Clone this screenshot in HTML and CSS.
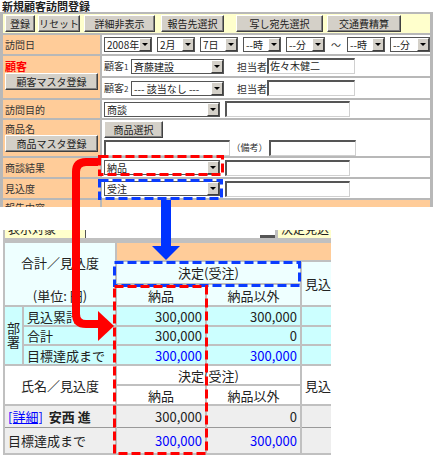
FILE: index.html
```html
<!DOCTYPE html>
<html lang="ja">
<head>
<meta charset="utf-8">
<title>新規顧客訪問登録</title>
<link rel="stylesheet" href="styles.css">
</head>
<body>
<div class="page">
  <div class="top">
    <div class="title">新規顧客訪問登録</div>
    <div class="form">
      <div class="btnrow">
        <span class="btn bw30">登録</span>
        <span class="btn bw42 ml3">リセット</span>
        <span class="btn bw71 ml4">詳細非表示</span>
        <span class="btn bw63 ml6">報告先選択</span>
        <span class="btn bw87 ml12">写し宛先選択</span>
        <span class="btn bw74 ml4">交通費精算</span>
      </div>

      <div class="lab">訪問日</div>
      <div class="val dates">
        <span class="sel w48"><span class="st">2008年</span><span class="ar"></span></span>
        <span class="sel w38"><span class="st">2月</span><span class="ar"></span></span>
        <span class="sel w38"><span class="st">7日</span><span class="ar"></span></span>
        <span class="sel w38"><span class="st">--時</span><span class="ar"></span></span>
        <span class="sel w39"><span class="st">--分</span><span class="ar"></span></span>
        <span class="tilde">～</span>
        <span class="sel w38"><span class="st">--時</span><span class="ar"></span></span>
        <span class="sel w40"><span class="st">--分</span><span class="ar"></span></span>
      </div>

      <div class="lab cust">
        <span class="red">顧客</span>
        <span class="btn bw93">顧客マスタ登録</span>
      </div>
      <div class="val custv">
        <div class="sub">
          <span class="kk">顧客<small>1</small></span>
          <span class="sel w93"><span class="st">斉藤建設</span><span class="ar"></span></span>
          <span class="tan">担当者</span>
          <span class="inp w88">佐々木健二</span>
        </div>
        <div class="sub">
          <span class="kk">顧客<small>2</small></span>
          <span class="sel w93"><span class="st">--- 該当なし ---</span><span class="ar"></span></span>
          <span class="tan">担当者</span>
          <span class="inp w88"></span>
        </div>
      </div>

      <div class="lab">訪問目的</div>
      <div class="val">
        <span class="sel w116"><span class="st">商談</span><span class="ar"></span></span>
        <span class="inp w125 ml5"></span>
      </div>

      <div class="lab prod">
        <span class="pl">商品名</span>
        <span class="btn bw93">商品マスタ登録</span>
      </div>
      <div class="val prodv">
        <span class="btn bw59">商品選択</span>
        <div class="line">
          <span class="inp w126"></span>
          <span class="biko">（備考）</span>
          <span class="inp w87"></span>
        </div>
      </div>

      <div class="lab">商談結果</div>
      <div class="val">
        <span class="sel w116"><span class="st">納品</span><span class="ar"></span></span>
        <span class="inp w125 ml5"></span>
      </div>

      <div class="lab">見込度</div>
      <div class="val">
        <span class="sel w116"><span class="st">受注</span><span class="ar"></span></span>
        <span class="inp w125 ml5"></span>
      </div>

      <div class="lab rep">報告内容</div>
      <div class="val repv"></div>
    </div>
  </div>

  <div class="bottom">
    <div class="shot">
      <div class="prow">
        <div class="py pa"><span class="pt">表示対象</span></div>
        <div class="psel"><span class="pbar"></span></div>
        <div class="py pb"><span class="pt">決定見込</span></div>
      </div>
      <div class="tbl">
        <div class="c hd corner">
          <span>合計／見込度</span>
          <span>(単位: 円)</span>
        </div>
        <div class="c org"></div>
        <div class="c hd ketei">決定(受注)</div>
        <div class="c hd miko">見込(A)</div>
        <div class="c hd nh1">納品</div>
        <div class="c hd nh2">納品以外</div>
        <div class="c dept"><span class="vt">部署</span></div>

        <div class="c bd lt">見込累計</div>
        <div class="c bd num">300,000</div>
        <div class="c bd num">300,000</div>
        <div class="c bd"></div>

        <div class="c bd lt">合計</div>
        <div class="c bd num">300,000</div>
        <div class="c bd num">0</div>
        <div class="c bd"></div>

        <div class="c bd lt">目標達成まで</div>
        <div class="c bd num blue">300,000</div>
        <div class="c bd num blue">300,000</div>
        <div class="c bd"></div>

        <div class="c wh name">氏名／見込度</div>
        <div class="c wh ketei2">決定(受注)</div>
        <div class="c wh miko2">見込(A)</div>
        <div class="c wh nh3">納品</div>
        <div class="c wh nh4">納品以外</div>

        <div class="c gr span2">
          <div class="p1 lt"><span class="lnk">[詳細]</span><b class="nm">安西 進</b></div>
          <div class="p2 lt">目標達成まで</div>
        </div>
        <div class="c gr">
          <div class="p1 num">300,000</div>
          <div class="p2 num blue">300,000</div>
        </div>
        <div class="c gr">
          <div class="p1 num">0</div>
          <div class="p2 num blue">300,000</div>
        </div>
        <div class="c gr">
          <div class="p1"></div>
          <div class="p2"></div>
        </div>
      </div>
    </div>
  </div>

  <svg class="overlay" width="435" height="457" viewBox="0 0 435 457">
    <g fill="none" stroke-width="3" stroke-dasharray="9 4">
      <rect x="99.5" y="156.5" width="123" height="18" stroke="#ff0000"/>
      <rect x="99.5" y="180.5" width="122" height="18" stroke="#0a3cff"/>
      <rect x="114.5" y="262.5" width="185" height="23" stroke="#0a3cff"/>
      <rect x="114.5" y="286.5" width="92" height="167" stroke="#ff0000"/>
    </g>
    <path d="M98 162 H86 Q76 162 76 172 V314 Q76 324 86 324 H101" fill="none" stroke="#ff0000" stroke-width="8"/>
    <polygon points="98,311 114,326 98,341" fill="#ff0000"/>
    <rect x="161" y="200" width="10" height="47" fill="#0033ff"/>
    <polygon points="152,246 180,246 166,260" fill="#0033ff"/>
  </svg>
</div>
</body>
</html>
```

FILE: styles.css
```css
* { box-sizing: border-box; }
body {
  margin: 0;
  background: #fff;
  font-family: "Noto Sans CJK JP", "Noto Sans", sans-serif;
  color: #222;
}
.page { position: relative; width: 435px; height: 457px; overflow: hidden; }

/* ---------- top form ---------- */
.top { height: 207px; overflow: hidden; }
.title {
  height: 12px; line-height: 12px; font-size: 11px; font-weight: bold;
  padding: 0 0 0 2px; color: #222;
}
.form {
  display: grid;
  grid-template-columns: 97px 328px;
  grid-template-rows: 19px 19px 42px 18px 36px 19px 19px 20px;
  gap: 2px;
  padding: 2px 3px;
  width: 433px;
  background: #b8b8b8;
  font-size: 10px;
  line-height: 13px;
}
.btnrow {
  grid-column: 1 / 3;
  background: #ffffcc;
  display: flex; align-items: center;
  padding-left: 2px;
}
.btn {
  display: flex; align-items: center; justify-content: center;
  height: 17px;
  background: #d4d0c8;
  border: 1px solid; border-color: #fff #404040 #404040 #fff;
  box-shadow: inset -1px -1px 0 #808080;
  font-size: 10px; color: #222; white-space: nowrap;
}
.bw30 { width: 30px; } .bw42 { width: 42px; } .bw71 { width: 71px; }
.bw63 { width: 63px; } .bw87 { width: 87px; } .bw74 { width: 74px; }
.bw93 { width: 93px; } .bw59 { width: 59px; }
.ml3 { margin-left: 3px; } .ml4 { margin-left: 4px; } .ml5 { margin-left: 5px; }
.ml6 { margin-left: 6px; } .ml12 { margin-left: 12px; }

.lab {
  background: #ffcc99; color: #333;
  display: flex; align-items: center; padding-left: 2px;
}
.val { background: #fff; display: flex; align-items: center; padding-left: 2px; }
.dates { gap: 5px; }
.tilde { width: 12px; text-align: center; color: #333; }

.sel {
  display: flex; height: 15px; flex: none;
  border: 1px solid #555; background: #fff;
}
.st { flex: 1; padding-left: 2px; line-height: 13px; white-space: nowrap; overflow: hidden; }
.ar {
  width: 12px; flex: none;
  background: #d4d0c8;
  border: 1px solid; border-color: #fff #404040 #404040 #fff;
  display: flex; align-items: center; justify-content: center;
}
.ar::after {
  content: "";
  border-left: 3px solid transparent; border-right: 3px solid transparent;
  border-top: 3px solid #000;
}
.w38 { width: 38px; } .w39 { width: 39px; } .w40 { width: 40px; } .w48 { width: 48px; }
.w93 { width: 93px; } .w116 { width: 116px; }

.inp {
  height: 16px; flex: none; background: #fff;
  border-top: 2px solid #555; border-left: 2px solid #555;
  border-right: 1px solid #d0d0d0; border-bottom: 1px solid #d0d0d0;
  padding-left: 1px; line-height: 12px; white-space: nowrap;
}
.w87 { width: 87px; } .w88 { width: 88px; } .w125 { width: 125px; } .w126 { width: 126px; }

.cust { flex-direction: column; align-items: flex-start; padding-top: 4px; }
.red { color: #ff0000; font-weight: bold; font-size: 11px; line-height: 13px; }
.custv { background: #b8b8b8; padding: 0; flex-direction: column; align-items: stretch; gap: 2px; }
.sub { flex: 1; background: #fff; display: flex; align-items: center; padding-left: 2px; }
.kk { width: 27px; color: #333; }
.kk small { font-size: 8px; }
.tan { margin-left: 13px; width: 30px; color: #333; }

.prod { flex-direction: column; align-items: flex-start; padding-top: 2px; }
.pl { line-height: 13px; }
.prodv { flex-direction: column; align-items: flex-start; justify-content: center; gap: 2px; }
.line { display: flex; align-items: center; }
.biko { font-size: 9px; width: 39px; text-align: center; color: #333; }

.rep { align-items: flex-start; padding-top: 1px; }
.repv { background: #ffcc99; }

/* ---------- lower table ---------- */
.bottom { width: 331px; height: 250px; overflow: hidden; padding-top: 23px; }
.shot { margin-left: 3px; background: #c0c0c0; }
.prow { display: flex; height: 8px; padding-left: 2px; }
.py { background: #ffffcc; overflow: hidden; }
.pa { width: 80px; }
.pb { flex: 1; margin-left: 3px; }
.pt { display: block; margin-top: -8px; line-height: 14px; font-size: 12px; padding-left: 3px; white-space: nowrap; }
.psel {
  width: 190px; background: #fff; border-left: 1px solid #555;
  display: flex; justify-content: flex-end; align-items: flex-end;
}
.pbar { width: 15px; height: 3px; background: #555; }

.tbl {
  display: grid;
  grid-template-columns: 17px 91px 88px 93px 60px;
  grid-template-rows: 17px 21px 20px 18px 17px 18px 18px 18px 47px;
  gap: 2px;
  padding: 5px 0 2px 2px;
  background: #c0c0c0;
  font-size: 13px;
  color: #222;
}
.c { display: flex; align-items: center; white-space: nowrap; overflow: hidden; }
.hd { background: #eeffff; justify-content: center; }
.wh { background: #fff; justify-content: center; }
.org { background: #ffcc99; grid-column: 3 / 6; grid-row: 1; }
.bd { background: #ccffff; }
.num { justify-content: flex-end; padding-right: 3px; }
.blue { color: #0000ff; }
.lt { padding-left: 3px; }

.corner {
  grid-column: 1 / 3; grid-row: 1 / 4;
  flex-direction: column; justify-content: space-between;
  padding: 12px 0 1px; line-height: 16px;
}
.ketei { grid-column: 3 / 5; grid-row: 2; }
.miko { grid-column: 5; grid-row: 2 / 4; justify-content: flex-start; padding-left: 3px; }
.nh1 { grid-column: 3; grid-row: 3; }
.nh2 { grid-column: 4; grid-row: 3; }
.dept {
  grid-column: 1; grid-row: 4 / 7;
  background: #ccffff;
  justify-content: center;
}
.vt { writing-mode: vertical-rl; line-height: 15px; letter-spacing: 1px; }
.name { grid-column: 1 / 3; grid-row: 7 / 9; }
.ketei2 { grid-column: 3 / 5; grid-row: 7; }
.miko2 { grid-column: 5; grid-row: 7 / 9; justify-content: flex-start; padding-left: 3px; }
.nh3 { grid-column: 3; grid-row: 8; }
.nh4 { grid-column: 4; grid-row: 8; }

.gr { background: #eeeeee; flex-direction: column; align-items: stretch; }
.span2 { grid-column: span 2; }
.gr .p1 { height: 22px; border-bottom: 1px solid #999; display: flex; align-items: center; }
.gr .p2 { flex: 1; display: flex; align-items: center; }
.lnk { color: #0000ff; text-decoration: underline; }
.nm { margin-left: 6px; font-weight: bold; }

.overlay { position: absolute; left: 0; top: 0; pointer-events: none; }
```
